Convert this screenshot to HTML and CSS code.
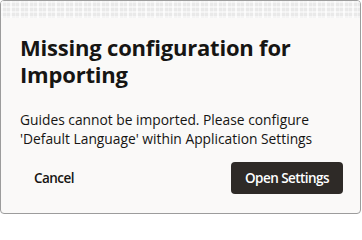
FILE: index.html
```html
<!DOCTYPE html>
<html lang="en">
<head>
<meta charset="utf-8">
<title>Missing configuration</title>
<link rel="stylesheet" href="styles.css">
</head>
<body>
<div class="frame">
  <div class="backdrop"></div>
  <div class="dialog">
    <h1 class="title">Missing configuration for Importing</h1>
    <p class="message">Guides cannot be imported. Please configure 'Default Language' within Application Settings</p>
    <div class="actions">
      <button class="btn btn-text">Cancel</button>
      <button class="btn btn-primary">Open Settings</button>
    </div>
  </div>
</div>
</body>
</html>
```
FILE: styles.css
```css
* { box-sizing: border-box; }
html, body { margin: 0; padding: 0; background: #ffffff; }
body { font-family: "Open Sans", "Noto Sans", sans-serif; color: #161513; }
.frame {
  width: 361px;
  height: 214px;
  border: 1px solid #9c9c9c;
  border-radius: 4px;
  overflow: hidden;
  display: flex;
  flex-direction: column;
  background: #faf9f8;
}
.backdrop {
  height: 17px;
  flex: none;
  background-color: #e9e9e9;
  background-image:
    repeating-linear-gradient(90deg, rgba(255,255,255,0.7) 0 2px, rgba(255,255,255,0) 2px 5px, rgba(255,255,255,0.4) 5px 6px, rgba(255,255,255,0) 6px 9px),
    repeating-linear-gradient(0deg, rgba(255,255,255,0.5) 0 2px, rgba(255,255,255,0) 2px 5px);
}
.dialog {
  flex: 1;
  padding: 16px 17px 0 19px;
  display: flex;
  flex-direction: column;
}
.title {
  margin: 0;
  font-size: 22px;
  line-height: 27px;
  font-weight: 700;
  color: #161513;
  letter-spacing: -0.2px;
}
.message {
  margin: 22px 0 0;
  font-size: 13.8px;
  line-height: 19px;
  color: #161513;
}
.actions {
  margin-top: 14px;
  display: flex;
  justify-content: space-between;
  align-items: center;
}
.btn {
  font-family: inherit;
  font-size: 13.5px;
  font-weight: 600;
  letter-spacing: -0.55px;
  border: none;
  border-radius: 4px;
  height: 32px;
  padding: 0 14px;
  white-space: nowrap;
  cursor: pointer;
}
.btn-text {
  background: transparent;
  color: #161513;
}
.btn-primary {
  background: #2e2a27;
  color: #ffffff;
  width: 112px;
}
```
